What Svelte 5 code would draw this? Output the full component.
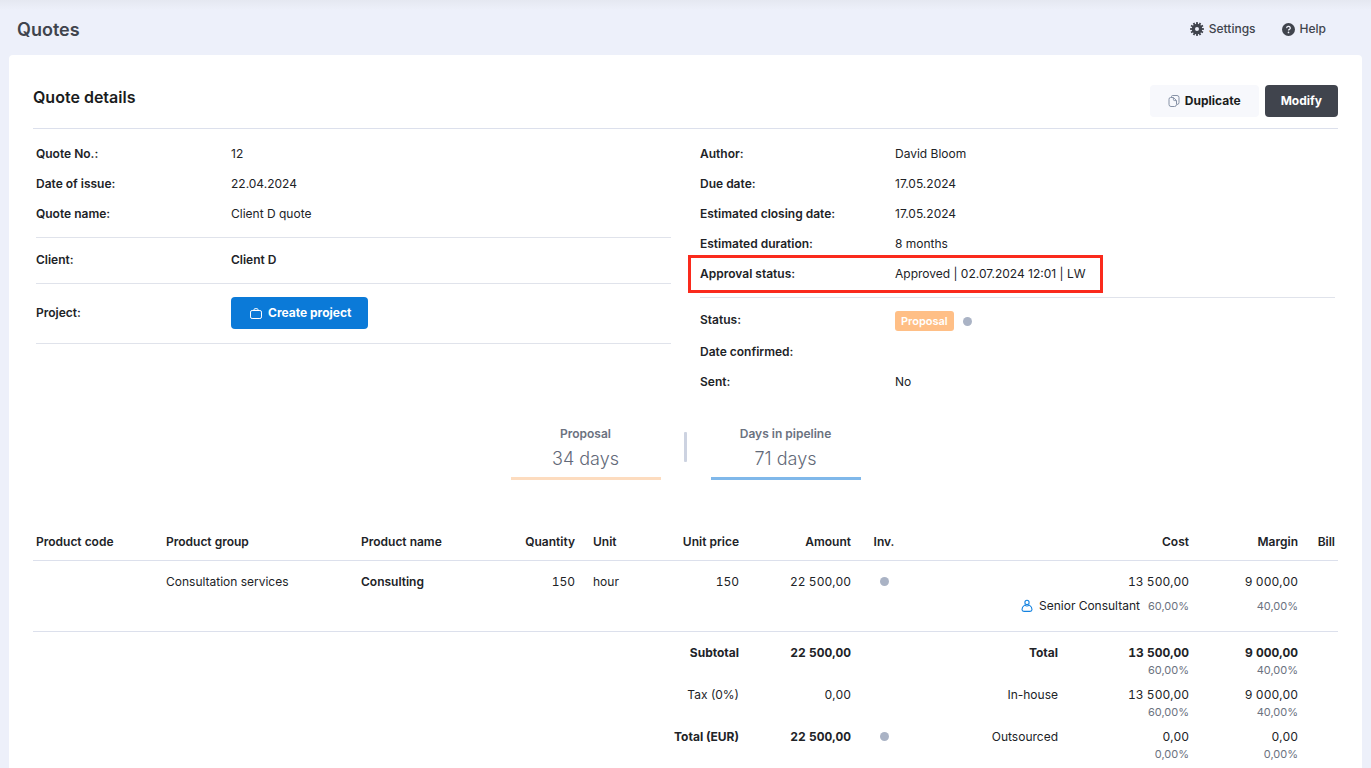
<script>
  const left = [
    ['Quote No.:', '12'],
    ['Date of issue:', '22.04.2024'],
    ['Quote name:', 'Client D quote'],
  ];
  const right = [
    ['Author:', 'David Bloom'],
    ['Due date:', '17.05.2024'],
    ['Estimated closing date:', '17.05.2024'],
    ['Estimated duration:', '8 months'],
  ];
  const totals = [
    { name: 'Subtotal', amount: '22 500,00', boldLeft: true, label: 'Total', boldRight: true, cost: '13 500,00', costShare: '60,00%', margin: '9 000,00', marginShare: '40,00%' },
    { name: 'Tax (0%)', amount: '0,00', label: 'In-house', cost: '13 500,00', costShare: '60,00%', margin: '9 000,00', marginShare: '40,00%' },
    { name: 'Total (EUR)', amount: '22 500,00', boldLeft: true, dot: true, label: 'Outsourced', cost: '0,00', costShare: '0,00%', margin: '0,00', marginShare: '0,00%' },
  ];
  const widths = [130, 195, 120, 100, 72, 92, 112, 60, 147, 131, 109, 37];
  const total = widths.reduce((a, b) => a + b, 0);
  const teeth = Array.from({ length: 12 }, (_, i) => i * 30);
</script>

<header class="top">
  <h1>Quotes</h1>
  <nav>
    <a href="#settings">
      <svg width="14" height="14" viewBox="0 0 14 14" aria-hidden="true">
        {#each teeth as a}
          <rect x="6.1" y="0.1" width="1.8" height="3" fill="#40444d" transform="rotate({a} 7 7)" />
        {/each}
        <circle cx="7" cy="7" r="3.6" fill="none" stroke="#40444d" stroke-width="3.2" />
      </svg>
      Settings
    </a>
    <a href="#help">
      <svg width="13" height="13" viewBox="0 0 13 13" aria-hidden="true">
        <circle cx="6.5" cy="6.5" r="6.5" fill="#40444d" />
        <path d="M4.7 5.1a1.8 1.6 0 1 1 2.7 1.3c-.6.4-.9.6-.9 1.2" fill="none" stroke="#eef1fa" stroke-width="1.3" />
        <circle cx="6.5" cy="9.4" r="0.85" fill="#eef1fa" />
      </svg>
      Help
    </a>
  </nav>
</header>

<main>
  <div class="titlebar">
    <h2>Quote details</h2>
    <div class="actions">
      <button type="button" class="light">
        <svg width="12" height="14" viewBox="0 0 12 14" fill="none" stroke="#8792a6" stroke-width="1" aria-hidden="true">
          <path d="M3.5 3V2.6Q3.5 1.5 4.7 1.5H9Q11 1.5 11 3.6V8.4Q11 10.5 9 10.5" />
          <path d="M2.6 3.5H5.4L8.5 6.6V10.4Q8.5 12.5 6.5 12.5H3Q1 12.5 1 10.4V5.3Q1 3.5 2.6 3.5Z" />
          <path d="M5.4 3.6V5.4Q5.4 6.6 6.6 6.6H8.4" />
        </svg>
        Duplicate
      </button>
      <button type="button" class="dark">Modify</button>
    </div>
  </div>

  <div class="details">
    <div>
      <dl>
        {#each left as [k, v]}
          <div class="row"><dt>{k}</dt><dd>{v}</dd></div>
        {/each}
      </dl>
      <dl>
        <div class="row"><dt>Client:</dt><dd><strong>Client D</strong></dd></div>
      </dl>
      <dl class="project">
        <div class="row">
          <dt>Project:</dt>
          <dd>
            <button type="button" class="blue">
              <svg width="13" height="11" viewBox="0 0 13 11" fill="none" stroke="#fff" stroke-width="1" aria-hidden="true">
                <rect x="0.5" y="2.5" width="11" height="8" rx="1.6" />
                <path d="M4 2.5V1.7Q4 0.7 5 0.7H7Q8 0.7 8 1.7V2.5" />
              </svg>
              Create project
            </button>
          </dd>
        </div>
      </dl>
    </div>
    <div>
      <dl>
        {#each right as [k, v]}
          <div class="row"><dt>{k}</dt><dd>{v}</dd></div>
        {/each}
        <div class="row marked"><dt>Approval status:</dt><dd>Approved | 02.07.2024 12:01 | LW</dd></div>
      </dl>
      <dl class="plain">
        <div class="row status">
          <dt>Status:</dt>
          <dd><span class="badge">Proposal</span><span class="dot"></span></dd>
        </div>
        <div class="row"><dt>Date confirmed:</dt><dd></dd></div>
        <div class="row"><dt>Sent:</dt><dd>No</dd></div>
      </dl>
    </div>
  </div>

  <section class="pipeline">
    <div class="stage peach"><h3>Proposal</h3><p>34 days</p></div>
    <span class="bar"></span>
    <div class="stage sky"><h3>Days in pipeline</h3><p>71 days</p></div>
  </section>

  <table>
    <colgroup>
      {#each widths as w}
        <col style="width: {(w / total) * 100}%" />
      {/each}
    </colgroup>
    <thead>
      <tr>
        <th>Product code</th>
        <th>Product group</th>
        <th>Product name</th>
        <th class="num">Quantity</th>
        <th class="unit">Unit</th>
        <th class="num">Unit price</th>
        <th class="num">Amount</th>
        <th class="mid">Inv.</th>
        <th class="num" colspan="2">Cost</th>
        <th class="num">Margin</th>
        <th class="num">Bill</th>
      </tr>
    </thead>
    <tbody class="items">
      <tr>
        <td></td>
        <td>Consultation services</td>
        <td><strong>Consulting</strong></td>
        <td class="num">150</td>
        <td class="unit">hour</td>
        <td class="num">150</td>
        <td class="num">22 500,00</td>
        <td class="mid"><span class="dot"></span></td>
        <td class="num" colspan="2">
          13 500,00
          <div class="role">
            <svg width="12" height="14" viewBox="0 0 12 14" fill="none" stroke="#1583e0" stroke-width="1.1" aria-hidden="true">
              <circle cx="6" cy="3.4" r="2.1" />
              <path d="M3.6 6.1C2 7.2 1 8.9 1 10.6C1 12 1.8 12.4 3 12.4H9C10.2 12.4 11 12 11 10.6C11 8.9 10 7.2 8.4 6.1C7 7.1 5 7.1 3.6 6.1Z" />
            </svg>
            <span>Senior Consultant</span>
            <small>60,00%</small>
          </div>
        </td>
        <td class="num">9 000,00<div class="role"><small>40,00%</small></div></td>
        <td></td>
      </tr>
    </tbody>
    <tbody class="totals">
      {#each totals as t}
        <tr>
          <td colspan="4"></td>
          <td class="num label" class:bold={t.boldLeft} colspan="2">{t.name}</td>
          <td class="num" class:bold={t.boldLeft}>{t.amount}</td>
          <td class="mid">{#if t.dot}<span class="dot"></span>{/if}</td>
          <td class="num label" class:bold={t.boldRight}>{t.label}</td>
          <td class="num" class:bold={t.boldRight}>{t.cost}<small>{t.costShare}</small></td>
          <td class="num" class:bold={t.boldRight}>{t.margin}<small>{t.marginShare}</small></td>
          <td></td>
        </tr>
      {/each}
    </tbody>
  </table>
</main>

<style>
  :global(body) {
    background: #edf0fa linear-gradient(#e5e8f1, #edf0fa 10px) no-repeat;
    color: #212327;
    font-family: Inter, sans-serif;
    font-size: 12px;
    line-height: 18px;
    overflow-x: hidden;
  }
  h1, h2, h3, p, dl, dd { margin: 0; }
  .top {
    display: flex;
    justify-content: space-between;
    align-items: center;
    height: 55px;
    padding: 0 45px 0 17px;
    box-sizing: border-box;
    color: #40444d;
  }
  h1 { font-size: 18px; line-height: 24px; font-weight: 600; padding-top: 4px; }
  nav { display: flex; gap: 26px; padding-top: 3px; }
  nav a {
    display: flex;
    align-items: center;
    gap: 5px;
    color: inherit;
    text-decoration: none;
    font-size: 12px;
    font-weight: 500;
  }
  main {
    margin: 0 9px;
    padding: 30px 24px 5px;
    background: #fff;
    border-radius: 4px 4px 0 0;
  }
  .titlebar {
    display: flex;
    justify-content: space-between;
    padding-bottom: 11px;
    border-bottom: 1px solid #dce0ec;
  }
  h2 { font-size: 16px; line-height: 24px; font-weight: 600; color: #1a1c20; }
  .actions { display: flex; gap: 6px; }
  button {
    display: inline-flex;
    align-items: center;
    height: 32px;
    border: 0;
    border-radius: 4px;
    padding: 0 16px;
    font: 700 12px/18px Inter, sans-serif;
    cursor: pointer;
  }
  .light { background: #f7f8fc; color: #1a1c20; padding: 0 18px; gap: 5px; }
  .dark { background: #40444d; color: #fff; }
  .blue { background: #0b7ad8; color: #fff; gap: 5px; padding: 0 17px 0 19px; }
  .details {
    display: grid;
    grid-template-columns: 1fr 1fr;
    column-gap: 29px;
    padding: 10px 3px 0;
  }
  dl { border-bottom: 1px solid #e0e3eb; padding-bottom: 8px; margin-bottom: 7px; }
  .plain { border: 0; padding: 0; margin: 0; }
  .row { display: flex; align-items: center; min-height: 30px; }
  dt { width: 195px; flex: none; font-weight: 600; }
  strong { font-weight: 600; }
  .bold { font-weight: 700; }
  .project { padding: 6px 0 14px; }
  .project .row { min-height: 32px; }
  .marked {
    box-sizing: border-box;
    width: fit-content;
    height: 38px;
    margin: -4px -12px;
    padding: 0 14px 0 9px;
    border: 3px solid #fa2a1c;
  }
  .status { align-items: flex-start; padding-top: 6px; min-height: 26px; }
  .status dd { display: flex; align-items: center; gap: 9px; }
  .badge {
    background: #ffbf86;
    color: #fff;
    border-radius: 3px;
    padding: 1px 6px;
    font-size: 11px;
    font-weight: 600;
  }
  .dot { display: inline-block; width: 9px; height: 9px; border-radius: 50%; background: #aab3c5; }
  .pipeline { display: flex; justify-content: center; gap: 24px; padding-top: 28px; }
  .stage { width: 150px; text-align: center; color: #6b7280; border-bottom: 3px solid; }
  .stage h3 { font-size: 12px; line-height: 18px; font-weight: 600; color: #6b7280; }
  .stage p { font-size: 18px; line-height: 24px; padding: 4px 0 6px; font-weight: 300; color: #626978; }
  .peach { border-color: #fddcbf; }
  .sky { border-color: #80b8ea; }
  .bar { width: 3px; height: 30px; margin: 7px 0 0 -1px; background: #cdd3e1; border-radius: 1px; }
  table {
    width: 100%;
    table-layout: fixed;
    border-collapse: collapse;
    margin-top: 43px;
  }
  th, td { text-align: left; vertical-align: top; padding: 0 3px; white-space: nowrap; }
  th { font-weight: 600; padding-top: 10px; padding-bottom: 9px; }
  td { font-variant-numeric: tabular-nums; }
  .num { text-align: right; }
  .label, small { font-variant-numeric: normal; }
  .mid { text-align: center; }
  .unit { padding-left: 15px; }
  .items td { padding-top: 12px; padding-bottom: 13px; }
  .items { border-top: 1px solid #dce0ec; border-bottom: 1px solid #dce0ec; }
  .role { display: flex; justify-content: flex-end; align-items: center; height: 24px; padding-top: 3px; }
  .role span { margin: 0 8px 0 6px; }
  small { font-size: 11px; color: #6b7280; font-weight: 400; }
  .totals td { height: 42px; padding-top: 0; }
  .totals tr:first-child td { padding-top: 12px; }
  .totals small { display: block; line-height: 16px; }
</style>
